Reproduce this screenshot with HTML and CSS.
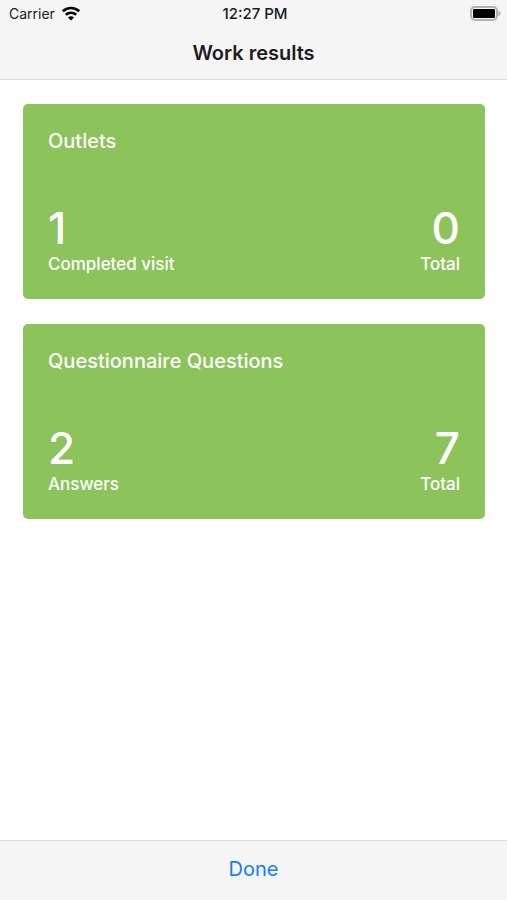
FILE: index.html
```html
<!DOCTYPE html>
<html lang="en">
<head>
<meta charset="utf-8">
<meta name="viewport" content="width=device-width, initial-scale=1">
<title>Work results</title>
<link rel="stylesheet" href="styles.css">
</head>
<body>
<header class="header">
  <div class="status">
    <div class="carrier">
      <span>Carrier</span>
      <svg class="wifi" viewBox="0 0 20 15" aria-hidden="true">
        <path d="M1.8 5.3a12 12 0 0 1 16.4 0" />
        <path d="M4.8 8.7a7.7 7.7 0 0 1 10.4 0" />
        <path class="wifi-dot" d="M10 14.6l-3-3a4.3 4.3 0 0 1 6 0z" />
      </svg>
    </div>
    <time class="clock">12:27 PM</time>
    <svg class="battery" viewBox="0 0 31 15" aria-hidden="true">
      <rect class="battery-case" x="1" y="1" width="26" height="13" rx="4" />
      <rect x="3" y="3" width="22" height="9" rx="1.2" />
      <path class="battery-tip" d="M28.3 5c3 1.2 3 3.8 0 5z" />
    </svg>
  </div>
  <h1 class="title">Work results</h1>
</header>
<main class="content">
  <section class="card">
    <h2 class="card-title">Outlets</h2>
    <div class="stats">
      <div class="stat"><strong class="value">1</strong><span class="label">Completed visit</span></div>
      <div class="stat stat-end"><strong class="value">0</strong><span class="label">Total</span></div>
    </div>
  </section>
  <section class="card">
    <h2 class="card-title">Questionnaire Questions</h2>
    <div class="stats">
      <div class="stat"><strong class="value">2</strong><span class="label">Answers</span></div>
      <div class="stat stat-end"><strong class="value">7</strong><span class="label">Total</span></div>
    </div>
  </section>
</main>
<footer class="toolbar">
  <button class="done" type="button">Done</button>
</footer>
</body>
</html>
```

FILE: styles.css
```css
* {
  box-sizing: border-box;
}

body {
  margin: 0;
  min-height: 100vh;
  display: flex;
  flex-direction: column;
  background: #fff;
  color: #1c1c1c;
  font-family: Inter, "Liberation Sans", sans-serif;
}

.header {
  background: #f5f5f5;
  border-bottom: 1px solid #dedede;
}

.status {
  display: grid;
  grid-template-columns: 1fr auto 1fr;
  align-items: center;
  height: 27px;
  padding: 0 6px 0 9px;
  font-size: 14px;
}

.carrier {
  display: flex;
  align-items: center;
  gap: 6px;
}

.wifi {
  width: 20px;
  height: 15px;
  fill: none;
  stroke: #000;
  stroke-width: 2.6;
}

.wifi-dot {
  fill: #000;
  stroke: none;
}

.clock {
  font-size: 15px;
  font-weight: 500;
}

.battery {
  justify-self: end;
  width: 31px;
  height: 15px;
}

.battery-case {
  fill: none;
  stroke: #b2b2b2;
  stroke-width: 2;
}

.battery-tip {
  fill: #b2b2b2;
}

.title {
  margin: 0;
  font-size: 20px;
  font-weight: 600;
  line-height: 52px;
  text-align: center;
}

.content {
  flex: 1;
  display: flex;
  flex-direction: column;
  gap: 25px;
  padding: 24px 22px 24px 23px;
}

.card {
  padding: 24px 25px;
  border-radius: 5px;
  background: #8cc35b;
  color: #fff;
}

.card-title {
  margin: 0 0 48px;
  font-size: 20px;
  font-weight: 500;
  line-height: 26px;
}

.stats {
  display: flex;
  justify-content: space-between;
}

.stat {
  display: flex;
  flex-direction: column;
}

.stat-end {
  text-align: right;
}

.value {
  font-size: 44px;
  font-weight: 500;
  line-height: 52px;
}

.label {
  font-size: 17px;
  font-weight: 500;
  line-height: 21px;
}

.toolbar {
  padding-bottom: 3px;
  border-top: 1px solid #dedede;
  background: #f5f5f5;
  text-align: center;
}

.done {
  display: block;
  margin: 0 auto;
  padding: 0 12px;
  border: 0;
  background: none;
  color: #147efb;
  font: inherit;
  font-size: 20px;
  line-height: 56px;
}
```
